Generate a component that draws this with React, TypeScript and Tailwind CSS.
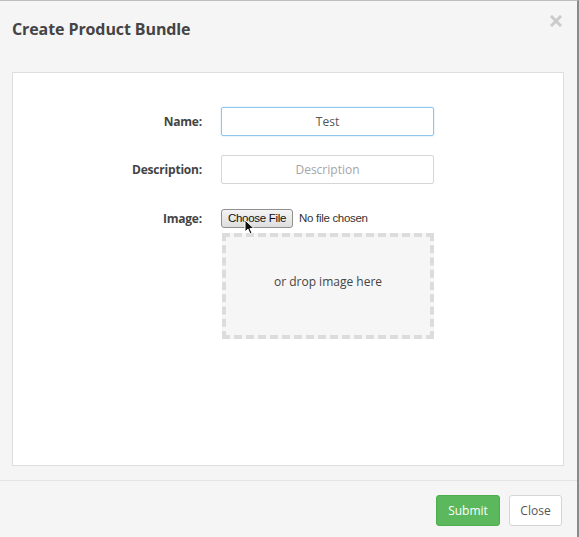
import React from "react";

export default function App() {
  return (
    <div
      className="w-[579px] h-[537px] bg-[#f5f5f5] border-t border-[#bdbdbd] border-r-2 border-r-[#8a8a8a] flex flex-col overflow-hidden relative"
      style={{ fontFamily: '"Open Sans", "Liberation Sans", sans-serif' }}
    >
      <div className="flex items-start justify-between pl-[12px] pr-[15px] pt-[17px] h-[71px]">
        <h1 className="text-[16px] font-bold text-[#444] leading-[22px] tracking-[-0.1px]">Create Product Bundle</h1>
        <svg className="mt-[-3px]" width="12" height="12" viewBox="0 0 12 12">
          <path d="M2 2 L10 10 M10 2 L2 10" stroke="#cbcbcb" strokeWidth="3" strokeLinecap="square" />
        </svg>
      </div>
      <div className="mx-[12px] w-[552px] h-[394px] bg-white border border-[#dedede] flex flex-col pt-[34px]">
        <div className="flex items-center">
          <label className="w-[208px] text-right text-[12px] font-bold text-[#444] pr-[19px] tracking-[-0.2px]">Name:</label>
          <div className="w-[213px] h-[29px] border border-[#8ec6ec] rounded-[2px] shadow-[0_0_2px_#b7dcf4] flex items-center justify-center text-[12px] text-[#555]">
            Test
          </div>
        </div>
        <div className="flex items-center mt-[19px]">
          <label className="w-[208px] text-right text-[12px] font-bold text-[#444] pr-[19px] tracking-[-0.2px]">Description:</label>
          <div className="w-[213px] h-[29px] border border-[#d6d6d6] rounded-[2px] flex items-center justify-center text-[12px] text-[#a5a5a5]">
            Description
          </div>
        </div>
        <div className="flex mt-[25px]">
          <label className="w-[208px] text-right text-[12px] font-bold text-[#444] pr-[19px] pt-[1px] tracking-[-0.2px]">Image:</label>
          <div className="flex flex-col">
            <div className="flex items-center relative" style={{ fontFamily: '"Liberation Sans", Arial, sans-serif' }}>
              <div className="h-[19px] w-[72px] border border-[#8f8f8f] rounded-[3px] bg-gradient-to-b from-[#f4f4f4] to-[#dedede] flex items-center justify-center text-[11.5px] tracking-[-0.3px] text-[#111]">
                Choose File
              </div>
              <span className="ml-[6px] text-[11.5px] tracking-[-0.3px] text-[#333]">No file chosen</span>
              <svg className="absolute left-[23px] top-[10px]" width="11" height="16" viewBox="0 0 11 16">
                <path d="M1 1 L1 13 L4 10 L6 15 L8 14 L6 9.5 L10 9.5 Z" fill="#111" stroke="#fff" strokeWidth="1" />
              </svg>
            </div>
            <div className="mt-[5px] ml-[1px] w-[212px] h-[106px] border-[4px] border-dashed border-[#dcdcdc] bg-[#f6f6f6] flex items-center justify-center text-[12px] text-[#444] pb-[8px]">
              or drop image here
            </div>
          </div>
        </div>
      </div>
      <div className="mt-[14px] border-t border-[#e4e4e4] flex-1 flex justify-end items-start pt-[14px] pr-[15px] gap-[9px]">
        <button className="h-[31px] w-[64px] rounded-[3px] bg-[#5cb85c] border border-[#4cae4c] text-white text-[12px]">
          Submit
        </button>
        <button className="h-[31px] w-[53px] rounded-[3px] bg-white border border-[#d5d5d5] text-[#555] text-[12px]">
          Close
        </button>
      </div>
    </div>
  );
}
